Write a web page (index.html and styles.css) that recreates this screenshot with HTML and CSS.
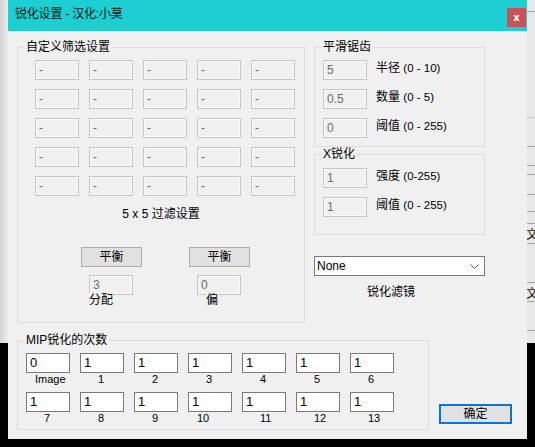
FILE: index.html
```html
<!DOCTYPE html>
<html lang="zh-CN">
<head>
<meta charset="utf-8">
<title>锐化设置 - 汉化:小莫</title>
<link rel="stylesheet" href="styles.css">
</head>
<body>
<div class="screen">
  <div class="side side-left"></div>
  <div class="window">
    <div class="titlebar">
      <span class="title">锐化设置 - 汉化:小莫</span>
      <button class="close" type="button">x</button>
    </div>
    <div class="client">
      <div class="top">
        <div class="group g-filter">
          <span class="legend">自定义筛选设置</span>
          <div class="matrix">
            <div class="edit">-</div><div class="edit">-</div><div class="edit">-</div><div class="edit">-</div><div class="edit">-</div>
            <div class="edit">-</div><div class="edit">-</div><div class="edit">-</div><div class="edit">-</div><div class="edit">-</div>
            <div class="edit">-</div><div class="edit">-</div><div class="edit">-</div><div class="edit">-</div><div class="edit">-</div>
            <div class="edit">-</div><div class="edit">-</div><div class="edit">-</div><div class="edit">-</div><div class="edit">-</div>
            <div class="edit">-</div><div class="edit">-</div><div class="edit">-</div><div class="edit">-</div><div class="edit">-</div>
          </div>
          <div class="caption">5 x 5 过滤设置</div>
          <div class="balance-row">
            <div class="bal">
              <button class="btn" type="button">平衡</button>
              <div class="edit bal-edit">3</div>
              <span class="bal-label">分配</span>
            </div>
            <div class="bal">
              <button class="btn" type="button">平衡</button>
              <div class="edit bal-edit">0</div>
              <span class="bal-label shift">偏</span>
            </div>
          </div>
        </div>
        <div class="right-col">
          <div class="group g-smooth">
            <span class="legend">平滑锯齿</span>
            <div class="param"><div class="edit">5</div><span class="param-label">半径 <span class="lat">(0 - 10)</span></span></div>
            <div class="param"><div class="edit">0.5</div><span class="param-label">数量 <span class="lat">(0 - 5)</span></span></div>
            <div class="param"><div class="edit">0</div><span class="param-label">阈值 <span class="lat">(0 - 255)</span></span></div>
          </div>
          <div class="group g-sharp">
            <span class="legend">X锐化</span>
            <div class="param"><div class="edit">1</div><span class="param-label">强度 <span class="lat">(0-255)</span></span></div>
            <div class="param"><div class="edit">1</div><span class="param-label">阈值 <span class="lat">(0 - 255)</span></span></div>
          </div>
          <div class="select">
            <span>None</span>
            <svg class="chev" width="9" height="5" viewBox="0 0 9 5"><polyline points="0.5,0.5 4.5,4.5 8.5,0.5" fill="none" stroke="#5a5a5a" stroke-width="1"/></svg>
          </div>
          <div class="select-label">锐化滤镜</div>
        </div>
      </div>
      <div class="bottom">
        <div class="group g-mip">
          <span class="legend">MIP锐化的次数</span>
          <div class="mip-grid">
            <div class="cell"><div class="edit live">0</div><span class="cap wide">Image</span></div>
            <div class="cell"><div class="edit live">1</div><span class="cap">1</span></div>
            <div class="cell"><div class="edit live">1</div><span class="cap">2</span></div>
            <div class="cell"><div class="edit live">1</div><span class="cap">3</span></div>
            <div class="cell"><div class="edit live">1</div><span class="cap">4</span></div>
            <div class="cell"><div class="edit live">1</div><span class="cap">5</span></div>
            <div class="cell"><div class="edit live">1</div><span class="cap">6</span></div>
            <div class="cell"><div class="edit live">1</div><span class="cap">7</span></div>
            <div class="cell"><div class="edit live">1</div><span class="cap">8</span></div>
            <div class="cell"><div class="edit live">1</div><span class="cap">9</span></div>
            <div class="cell"><div class="edit live">1</div><span class="cap wide">10</span></div>
            <div class="cell"><div class="edit live">1</div><span class="cap">11</span></div>
            <div class="cell"><div class="edit live">1</div><span class="cap">12</span></div>
            <div class="cell"><div class="edit live">1</div><span class="cap">13</span></div>
          </div>
        </div>
        <button class="btn ok" type="button">确定</button>
      </div>
    </div>
  </div>
  <div class="side side-right">
    <div class="strip r12"></div>
    <div class="strip r106"></div>
    <div class="strip r29"></div>
    <div class="strip r19"></div>
    <div class="strip r9"></div>
    <div class="strip r20"></div>
    <div class="strip r17"></div>
    <div class="strip r12"></div>
    <div class="strip r20 glyph">文</div>
    <div class="strip r39"></div>
    <div class="strip r19 glyph">文</div>
    <div class="strip r29"></div>
  </div>
</div>
</body>
</html>
```

FILE: styles.css
```css
* { box-sizing: border-box; }
html, body { margin: 0; padding: 0; }
body {
  background: #000;
  font-family: "Liberation Sans", "Noto Sans CJK SC", sans-serif;
  font-size: 12px;
  color: #000;
}
.screen {
  width: 535px;
  height: 447px;
  display: flex;
  align-items: flex-start;
  overflow: hidden;
  background: #000;
}
.side { flex: none; width: 8px; height: 343px; }
.side-left { background: linear-gradient(to right, #d4d4d4, #ebebeb); }
.side-right { background: #e8e8e8; overflow: hidden; display: flex; flex-direction: column; }
.strip { flex: none; border-bottom: 1px solid #a4a4a4; overflow: hidden; white-space: nowrap; }
.r12 { height: 12px; }
.r106 { height: 106px; border-bottom-color: #c8c8c8; }
.r29 { height: 29px; }
.r19 { height: 19px; }
.r9 { height: 9px; }
.r20 { height: 20px; }
.r17 { height: 17px; }
.r39 { height: 39px; }
.glyph {
  font-family: "Noto Sans CJK SC", sans-serif;
  font-size: 12px;
  line-height: 18px;
  padding-top: 1px;
  margin-left: -1px;
  color: #111;
}

.window {
  flex: none;
  width: 519px;
  height: 439px;
  display: flex;
  flex-direction: column;
  background: #f0f0f0;
}
.titlebar {
  flex: none;
  height: 31px;
  background: #1ccfd2;
  display: flex;
  align-items: flex-start;
}
.title {
  padding: 6px 0 0 7px;
  line-height: 16px;
  font-size: 12px;
  letter-spacing: -0.2px;
  color: #141414;
}
.close {
  margin: 8px 1px 0 auto;
  width: 19px;
  height: 19px;
  padding: 0;
  border: 0;
  background: #c8525a;
  color: #fff;
  font: bold 10px/18px "DejaVu Sans", sans-serif;
}
.client {
  flex: 1;
  padding: 16px 0 0 9px;
}
.top { display: flex; gap: 9px; }

.group {
  position: relative;
  border: 1px solid #dcdcdc;
}
.legend {
  position: absolute;
  top: -8px;
  left: 6px;
  padding: 0 2px;
  background: #f0f0f0;
  line-height: 14px;
  font-size: 12px;
  white-space: nowrap;
}

.edit {
  flex: none;
  width: 44px;
  height: 20px;
  padding-left: 3px;
  border: 1px solid #c6c6c6;
  box-shadow: inset 0 0 0 1px #fafafa;
  background: #f0f0f0;
  color: #6d6d6d;
  font-size: 12px;
  line-height: 18px;
  white-space: nowrap;
}
.edit.live {
  border-color: #7a7a7a;
  box-shadow: none;
  background: #fff;
  color: #000;
  font-size: 13px;
}

.btn {
  width: 61px;
  height: 20px;
  padding: 0;
  border: 1px solid #adadad;
  background: #e1e1e1;
  color: #000;
  font: 12px/18px "Liberation Sans", "Noto Sans CJK SC", sans-serif;
}

.g-filter {
  flex: none;
  width: 288px;
  height: 276px;
  padding-top: 12px;
}
.matrix {
  margin-left: 17px;
  display: grid;
  grid-template-columns: repeat(5, 44px);
  grid-auto-rows: 20px;
  column-gap: 10px;
  row-gap: 9px;
}
.caption {
  margin-top: 10px;
  text-align: center;
  line-height: 16px;
}
.balance-row {
  margin: 25px 0 0 63px;
  display: flex;
  gap: 47px;
}
.bal {
  width: 61px;
  display: flex;
  flex-direction: column;
  align-items: flex-start;
}
.bal-edit { margin: 8px 0 0 8px; }
.bal-label {
  position: relative;
  margin: -2px 0 0 8px;
  line-height: 15px;
  background: #f0f0f0;
}
.bal-label.shift { margin-left: 17px; }

.right-col {
  flex: none;
  width: 171px;
  display: flex;
  flex-direction: column;
}
.g-smooth {
  height: 100px;
  padding: 12px 0 0 8px;
  display: flex;
  flex-direction: column;
  gap: 9px;
}
.g-sharp {
  margin-top: 7px;
  height: 81px;
  padding: 13px 0 0 8px;
  display: flex;
  flex-direction: column;
  gap: 9px;
}
.param {
  display: flex;
  align-items: flex-start;
  gap: 9px;
}
.param-label {
  line-height: 16px;
  white-space: nowrap;
}
.lat { font-size: 11.5px; }
.select {
  margin-top: 21px;
  height: 20px;
  border: 1px solid #7a7a7a;
  background: #fff;
  padding: 0 5px 0 2px;
  display: flex;
  align-items: center;
  justify-content: space-between;
  line-height: 16px;
}
.chev { display: block; }
.select-label {
  margin: 8px 0 0 53px;
  line-height: 16px;
}

.bottom {
  margin-top: 17px;
  display: flex;
  align-items: flex-end;
  gap: 10px;
}
.g-mip {
  flex: none;
  width: 412px;
  height: 90px;
  padding: 12px 0 0 8px;
}
.mip-grid {
  display: grid;
  grid-template-columns: repeat(7, 44px);
  column-gap: 10px;
  row-gap: 6px;
}
.cell { display: flex; flex-direction: column; }
.cap {
  padding-left: 18px;
  line-height: 13px;
  font-size: 11px;
  white-space: nowrap;
}
.cap.wide { padding-left: 9px; }
.ok {
  width: 73px;
  margin-bottom: 6px;
  border: 2px solid #0078d7;
  line-height: 16px;
}
```
